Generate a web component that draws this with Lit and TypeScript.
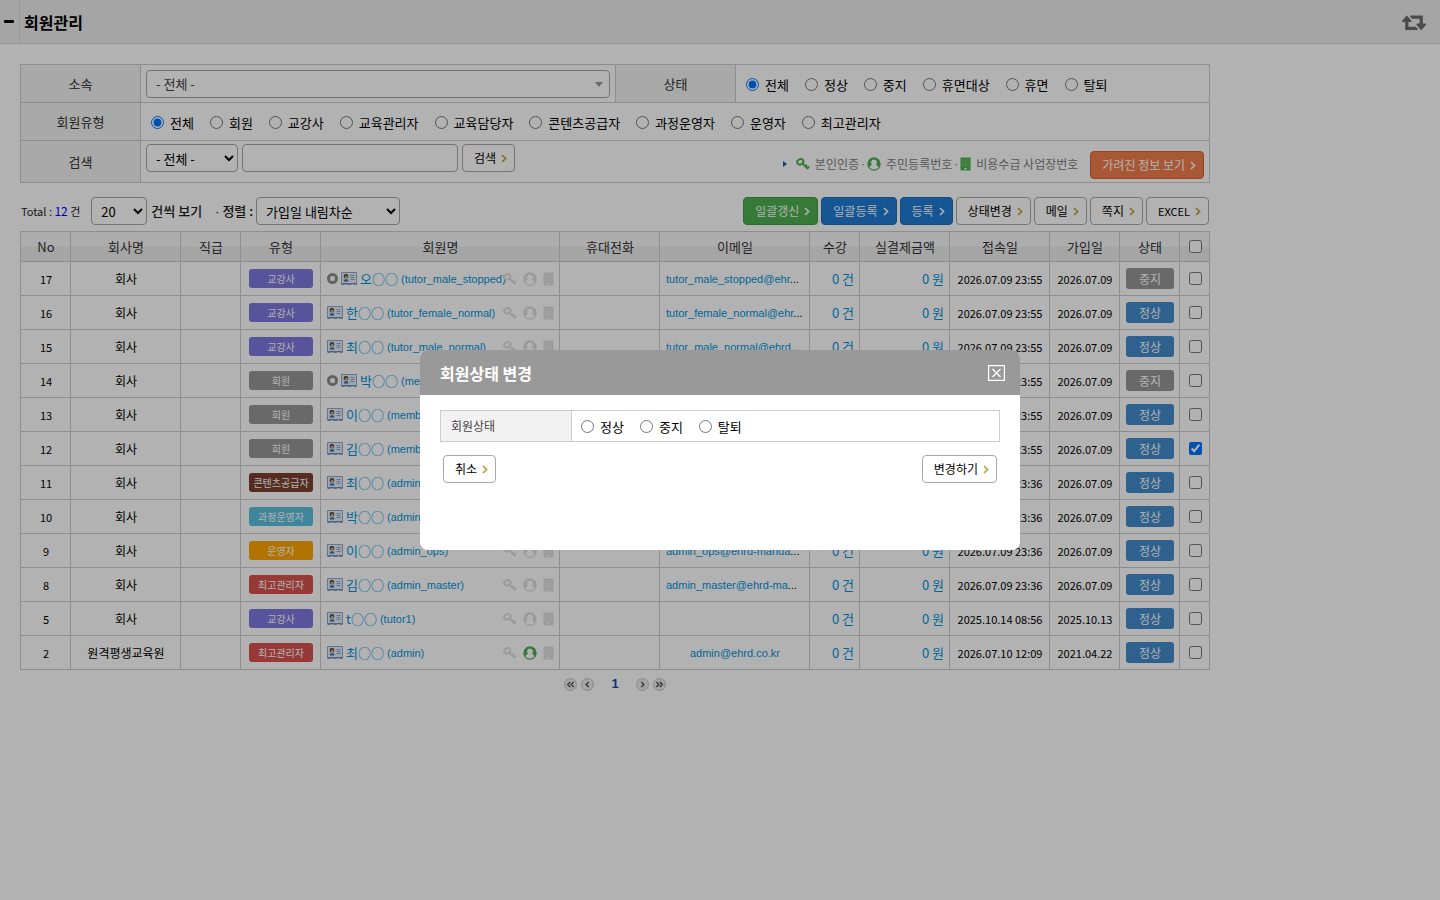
import { LitElement, html, css, svg, nothing } from "lit";
import { customElement } from "lit/decorators.js";
import { classMap } from "lit/directives/class-map.js";

interface Member {
  no: number;
  company: string;
  type: string;
  name: string;
  id: string;
  email: string;
  cut: boolean;
  visited: string;
  joined: string;
  stopped?: boolean;
  checked?: boolean;
  verified?: boolean;
}

const TYPE_CLASS: Record<string, string> = {
  교강사: "tutor",
  회원: "member",
  콘텐츠공급자: "provider",
  과정운영자: "course",
  운영자: "operator",
  최고관리자: "master",
};

const D = "2026.07.09";

const MEMBERS: Member[] = [
  { no: 17, company: "회사", type: "교강사", name: "오○○", id: "tutor_male_stopped", email: "tutor_male_stopped@ehr", cut: true, visited: `${D} 23:55`, joined: D, stopped: true },
  { no: 16, company: "회사", type: "교강사", name: "한○○", id: "tutor_female_normal", email: "tutor_female_normal@ehr", cut: true, visited: `${D} 23:55`, joined: D },
  { no: 15, company: "회사", type: "교강사", name: "최○○", id: "tutor_male_normal", email: "tutor_male_normal@ehrd", cut: true, visited: `${D} 23:55`, joined: D },
  { no: 14, company: "회사", type: "회원", name: "박○○", id: "member_stopped", email: "member_stopped@ehr", cut: true, visited: `${D} 23:55`, joined: D, stopped: true },
  { no: 13, company: "회사", type: "회원", name: "이○○", id: "member_female", email: "member_female@ehrd", cut: true, visited: `${D} 23:55`, joined: D },
  { no: 12, company: "회사", type: "회원", name: "김○○", id: "member_male", email: "member_male@ehrd", cut: true, visited: `${D} 23:55`, joined: D, checked: true },
  { no: 11, company: "회사", type: "콘텐츠공급자", name: "최○○", id: "admin_cp", email: "admin_cp@ehrd-manu", cut: true, visited: `${D} 23:36`, joined: D },
  { no: 10, company: "회사", type: "과정운영자", name: "박○○", id: "admin_course", email: "admin_course@ehrd", cut: true, visited: `${D} 23:36`, joined: D },
  { no: 9, company: "회사", type: "운영자", name: "이○○", id: "admin_ops", email: "admin_ops@ehrd-manua", cut: true, visited: `${D} 23:36`, joined: D },
  { no: 8, company: "회사", type: "최고관리자", name: "김○○", id: "admin_master", email: "admin_master@ehrd-ma", cut: true, visited: `${D} 23:36`, joined: D },
  { no: 5, company: "회사", type: "교강사", name: "t○○", id: "tutor1", email: "", cut: false, visited: "2025.10.14 08:56", joined: "2025.10.13" },
  { no: 2, company: "원격평생교육원", type: "최고관리자", name: "최○○", id: "admin", email: "admin@ehrd.co.kr", cut: false, visited: "2026.07.10 12:09", joined: "2021.04.22", verified: true },
];

const HEADS = ["No", "회사명", "직급", "유형", "회원명", "휴대전화", "이메일", "수강", "실결제금액", "접속일", "가입일", "상태"];

const chevron = html`<svg class="chev" viewBox="0 0 6 9" width="6" height="9" aria-hidden="true">
  <path d="M1 1l3.600 3.500L1 8" fill="none" stroke="currentColor" stroke-width="1.600" />
</svg>`;

const keyIcon = html`<svg class="ico" viewBox="0 0 14 14" width="14" height="14" aria-hidden="true">
  <ellipse cx="4.300" cy="4.800" rx="3.200" ry="2.600" transform="rotate(-25 4.300 4.800)" fill="none" stroke="currentColor" stroke-width="2" />
  <path d="M6.300 6.500l6 5.400M9 9.800l1.800-2.200M11 11.600l2-2.200" fill="none" stroke="currentColor" stroke-width="2" />
</svg>`;

const personIcon = html`<svg class="ico" viewBox="0 0 14 14" width="14" height="14" aria-hidden="true">
  <path fill="currentColor" fill-rule="evenodd" d="M7 .3a6.700 6.700 0 1 0 0 13.400A6.700 6.700 0 0 0 7 .3zM7 2.400a3 3 0 0 1 1.900 5.300c1.400.5 2.300 1.500 2.600 2.900A5.600 5.600 0 0 1 7 12.500a5.600 5.600 0 0 1-4.500-1.900c.3-1.400 1.200-2.400 2.600-2.900A3 3 0 0 1 7 2.400z" />
</svg>`;

const buildingIcon = html`<svg class="ico" viewBox="0 0 11 14" width="11" height="14" aria-hidden="true">
  <path fill="currentColor" d="M.5.5h10v13h-10z" />
  <path d="M2.500 3h1M5 3h1M7.500 3h1M2.500 5h1M5 5h1M7.500 5h1M2.500 7h1M5 7h1M7.500 7h1M2.500 9h1M5 9h1M7.500 9h1" stroke="#fff" stroke-opacity=".55" />
  <path d="M4.500 11h2v1.500h-2z" fill="#fff" />
</svg>`;

const cardIcon = html`<svg class="ico" viewBox="0 0 16 13" width="16" height="13" aria-hidden="true">
  <path d="M.5.5h15v11.500h-3l-1-1-1 1h-4l-1-1-1 1h-4z" fill="#e4eef9" stroke="#8faacb" />
  <path d="M.5 12h3l1-1 1 1h5l1-1 1 1h3" fill="none" stroke="#3f66a0" />
  <rect x="2.500" y="2" width="5" height="7" fill="#c3d3e6" />
  <circle cx="5" cy="4.200" r="2.100" fill="#4a3018" />
  <circle cx="5.200" cy="4.800" r="1.200" fill="#f0c090" />
  <path d="M2.800 9.500c0-3 4.600-3 4.600 0z" fill="#3d66a8" />
  <path d="M9.500 3.500h4M9.500 5.500h4M9.500 7.500h4" stroke="#8ba5c6" />
</svg>`;

const stopIcon = html`<svg class="ico" viewBox="0 0 12 12" width="11" height="11" role="img" aria-label="중지">
  <circle cx="6" cy="6" r="6" fill="#8c8c8c" /><rect x="3.500" y="3.500" width="5" height="5" rx="1" fill="#fff" />
</svg>`;

const pageIcon = (label: string, strokes: string) => html`<button class="pg" type="button" aria-label=${label}>
  <svg viewBox="0 0 13 13" width="13" height="13" aria-hidden="true">
    <circle cx="6.500" cy="6.500" r="6" fill="#ececec" stroke="#c4c4c4" />
    ${svg`<path d=${strokes} fill="none" stroke="#555" stroke-width="1.500" />`}
  </svg>
</button>`;

@customElement("app-root")
export class AppRoot extends LitElement {
  static styles = css`
    :host {
      display: block;
      min-height: 100vh;
      background: #fff;
      color: #000;
      font: 12px/18px "Noto Sans CJK KR", "Noto Sans", sans-serif;
    }
    * { box-sizing: border-box; }
    a { color: #0093dc; text-decoration: none; }
    svg { display: block; flex: none; }
    .bar {
      display: flex;
      align-items: center;
      height: 44px;
      background: #ececec;
      border-bottom: 1px solid #d6d6d6;
      padding-right: 14px;
    }
    .fold {
      align-self: stretch;
      width: 20px;
      padding: 0 0 0 4px;
      border: 0;
      border-right: 1px solid #dcdcdc;
      background: none;
    }
    .bar h1 { flex: 1; margin: 0 0 0 4px; font-size: 16px; line-height: 24px; font-weight: 700; }
    .reload { border: 0; padding: 0; background: none; color: #6c6c6c; }
    main { width: 100%; max-width: 1230px; padding: 20px; }

    .grid { width: 100%; border-collapse: collapse; table-layout: fixed; }
    .grid th, .grid td { border: 1px solid #ccc; padding: 0 5px; font-weight: 400; }
    .search th { background: #f2f2f2; color: #333; font-size: 13px; }
    .search td { height: 38px; }
    .search .c1, .search .c3 { width: 120px; }
    .search .c2 { width: 475px; }
    .search .last { height: 42px; }
    .radios { display: flex; gap: 16px; padding: 2px 5px 0; font-size: 13px; line-height: 18px; }
    .radios label { display: flex; align-items: center; gap: 6px; white-space: nowrap; }
    input[type="radio"], input[type="checkbox"] { width: 13px; height: 13px; margin: 0; flex: none; }
    .box { position: relative; }
    .box svg { position: absolute; right: 7px; top: 12px; pointer-events: none; }
    select, .text {
      height: 28px;
      border: 1px solid #a6a6a6;
      border-radius: 4px;
      background: #fff;
      color: #000;
      font: inherit;
      font-size: 13px;
      padding: 0 5px;
    }
    .box select { display: block; width: 100%; appearance: none; padding: 0 9px; color: #444; }
    .query { display: flex; min-height: 35px; gap: 4px; }
    .query .scope { width: 92px; }
    .text { width: 216px; }
    .btn {
      display: inline-flex;
      align-items: center;
      gap: 5px;
      height: 28px;
      padding: 0 7px 0 11px;
      border: 1px solid #aaa;
      border-radius: 4px;
      background: #fff;
      color: #000;
      font: inherit;
      white-space: nowrap;
    }
    .btn.latin { font-size: 11px; }
    .btn .chev { color: #b5a136; }
    .btn.green { background: #4caf50; border-color: #3d9a42; }
    .btn.blue { background: #227bd4; border-color: #1c6cbc; }
    .btn.orange { background: #f27e4e; border-color: #d9622f; }
    .btn.green, .btn.blue, .btn.orange, .green .chev, .blue .chev, .orange .chev { color: #fff; }
    .legend { display: flex; align-items: center; align-self: flex-end; gap: 12px; margin-left: auto; color: #808080; }
    .legend .keys { display: flex; align-items: center; gap: 2px; padding-bottom: 3px; }
    .legend .key { display: flex; align-items: center; gap: 5px; }
    .legend .ico { color: #4caf50; }
    .legend .mark { margin-right: 7px; }
    .dot { font-family: "Liberation Sans", sans-serif; }

    .tools { display: flex; align-items: center; gap: 3px; padding: 14px 1px 6px; }
    .tools .total { margin-right: 8px; color: #222; font-size: 11px; }
    .tools .total b { color: #00f; font-weight: 400; font-size: 12px; }
    .tools .size { width: 56px; margin-right: 1px; }
    .tools .order { width: 144px; }
    .tools label { font-size: 13px; font-weight: 500; color: #222; }
    .tools .sort { margin-left: 10px; }
    .tools .actions { display: flex; gap: 3px; margin-left: auto; }

    .list th {
      height: 30px;
      background: linear-gradient(#f8f8f8 50%, #ededed 50%);
      color: #333;
      font-size: 13px;
    }
    .list th, .list td { padding: 0 5px 0 6px; }
    .list td { height: 34px; text-align: center; white-space: nowrap; }
    .list .num { text-align: right; font-size: 13px; }
    .list .date, .list .no { font-size: 11px; }
    .list .left { text-align: left; }
    .list .id, .list .mail { font-family: "Liberation Sans", sans-serif; font-size: 11px; }
    .list input { display: block; margin: 0 auto; }
    .w30 { width: 30px; } .w50 { width: 50px; } .w60 { width: 60px; } .w70 { width: 70px; }
    .w80 { width: 80px; } .w90 { width: 90px; } .w100 { width: 100px; } .w110 { width: 110px; }
    .w150 { width: 150px; }
    .who { display: flex; align-items: center; gap: 3px; }
    .who a { display: flex; gap: 3px; flex: 1; min-width: 0; font-size: 13px; }
    .flags { display: flex; align-items: center; gap: 6px; margin-left: -3px; color: #dedede; }
    .flags .on { color: #4caf50; }
    .tag {
      display: block;
      margin: 0 2px;
      border-radius: 3px;
      font-size: 10px;
      line-height: 19px;
      color: #fff;
    }
    .tutor { background: #7f77dd; }
    .member { background: #979797; }
    .provider { background: #7b3f2f; }
    .course { background: #5bc0de; }
    .operator { background: #ffa500; }
    .master { background: #d9534f; }
    .state {
      display: block;
      width: 100%;
      height: 21px;
      padding: 0;
      border: 0;
      border-radius: 3px;
      background: #428bca;
      color: #fff;
      font: inherit;
    }
    .state.off { background: #979797; }
    .pager { display: flex; justify-content: center; align-items: center; gap: 4px; padding-top: 4px; }
    .pg { border: 0; padding: 0; background: none; }
    .pager strong { margin: 0 13px; color: #0d4fae; font: bold 13px/20px "Liberation Sans", sans-serif; }

    .dim {
      position: fixed;
      inset: 0;
      display: flex;
      align-items: center;
      justify-content: center;
      background: rgba(0, 0, 0, 0.3);
    }
    .dialog {
      width: 600px;
      max-width: 100%;
      min-height: 200px;
      border-radius: 8px;
      overflow: hidden;
      background: #fff;
    }
    .dialog header {
      display: flex;
      align-items: center;
      justify-content: space-between;
      height: 45px;
      padding: 0 15px 0 20px;
      background: #999;
      color: #fff;
    }
    .dialog h2 { margin: 0; font-size: 16px; line-height: 24px; font-weight: 700; }
    .close { padding: 0; border: 0; background: none; color: #fff; }
    .body { padding: 15px 20px; }
    .form th { width: 131px; padding: 0 10px; background: #f2f2f2; color: #444; text-align: left; }
    .form td { height: 31px; }
    .form .radios { padding: 1px 4px 0; }
    .foot { display: flex; justify-content: space-between; padding: 13px 3px 0; }
  `;

  private radios(name: string, items: string[], picked = 0) {
    return html`<div class="radios" role="radiogroup">
      ${items.map((t, i) => html`<label><input type="radio" name=${name} .checked=${i === picked} />${t}</label>`)}
    </div>`;
  }

  private button(text: string, tone = "") {
    return html`<button type="button" class="btn ${tone}">${text}${chevron}</button>`;
  }

  private row(m: Member) {
    return html`<tr>
      <td class="no">${m.no}</td>
      <td>${m.company}</td>
      <td></td>
      <td><span class="tag ${TYPE_CLASS[m.type]}">${m.type}</span></td>
      <td class="left">
        <div class="who">
          ${m.stopped ? stopIcon : nothing}${cardIcon}
          <a href="#"><span>${m.name}</span><span class="id">(${m.id})</span></a>
          <div class="flags">${keyIcon}<span class=${classMap({ on: !!m.verified })}>${personIcon}</span>${buildingIcon}</div>
        </div>
      </td>
      <td></td>
      <td class=${classMap({ mail: true, left: m.cut })}>${m.email ? html`<a href="#">${m.email}</a>` : nothing}${m.cut ? "..." : nothing}</td>
      <td class="num"><a href="#">0 건</a></td>
      <td class="num"><a href="#">0 원</a></td>
      <td class="date">${m.visited}</td>
      <td class="date">${m.joined}</td>
      <td><button type="button" class=${classMap({ state: true, off: !!m.stopped })}>${m.stopped ? "중지" : "정상"}</button></td>
      <td><input type="checkbox" aria-label="${m.id} 선택" .checked=${!!m.checked} /></td>
    </tr>`;
  }

  render() {
    const dot = html`<span class="dot">·</span>`;
    return html`
      <div class="bar">
        <button class="fold" type="button" aria-label="메뉴 접기">
          <svg viewBox="0 0 10 4" width="10" height="4"><rect width="10" height="3" rx="1" /></svg>
        </button>
        <h1>회원관리</h1>
        <button class="reload" type="button" aria-label="새로고침">
          <svg viewBox="0 256 1920 1280" width="24" height="16">
            <path fill="currentColor" d="M1280 1504q0 13-9.500 22.500t-22.500 9.500h-960q-8 0-13.500-2t-9-7-5.500-8-3-11.500-1-11.500v-600h-192q-26 0-45-19t-19-45q0-24 15-41l320-384q19-22 49-22t49 22l320 384q15 17 15 41 0 26-19 45t-45 19h-192v384h576q16 0 25 11l160 192q7 10 7 21zm640-416q0 24-15 41l-320 384q-20 23-49 23t-49-23l-320-384q-15-17-15-41 0-26 19-45t45-19h192v-384h-576q-16 0-25-12l-160-192q-7-9-7-20 0-13 9.500-22.500t22.500-9.500h960q8 0 13.500 2t9 7 5.500 8 3 11.500 1 11.500v600h192q26 0 45 19t19 45z" />
          </svg>
        </button>
      </div>
      <main>
        <table class="grid search">
          <colgroup><col class="c1" /><col class="c2" /><col class="c3" /><col /></colgroup>
          <tr>
            <th scope="row"><label for="dept">소속</label></th>
            <td>
              <div class="box">
                <select id="dept"><option>- 전체 -</option></select>
                <svg viewBox="0 0 8 5" width="8" height="5"><path d="M0 0h8L4 5z" fill="#999" /></svg>
              </div>
            </td>
            <th scope="row">상태</th>
            <td>${this.radios("state", ["전체", "정상", "중지", "휴면대상", "휴면", "탈퇴"])}</td>
          </tr>
          <tr>
            <th scope="row">회원유형</th>
            <td colspan="3">
              ${this.radios("type", ["전체", "회원", "교강사", "교육관리자", "교육담당자", "콘텐츠공급자", "과정운영자", "운영자", "최고관리자"])}
            </td>
          </tr>
          <tr>
            <th scope="row"><label for="word">검색</label></th>
            <td class="last" colspan="3">
              <div class="query">
                <select class="scope" aria-label="검색 항목"><option>- 전체 -</option></select>
                <input class="text" id="word" type="text" />
                ${this.button("검색")}
                <div class="legend">
                  <div class="keys">
                    <svg class="mark" viewBox="0 0 4 6" width="4" height="6"><path d="M0 0l4 3-4 3z" fill="#0068b0" /></svg>
                    <span class="key">${keyIcon}본인인증</span>${dot}
                    <span class="key">${personIcon}주민등록번호</span>${dot}
                    <span class="key">${buildingIcon}비용수급 사업장번호</span>
                  </div>
                  ${this.button("가려진 정보 보기", "orange")}
                </div>
              </div>
            </td>
          </tr>
        </table>

        <div class="tools">
          <span class="total">Total : <b>12</b> 건</span>
          <select class="size" id="size"><option>20</option></select>
          <label for="size">건씩 보기</label>
          <label class="sort" for="order">${dot} 정렬 :</label>
          <select class="order" id="order"><option>가입일 내림차순</option></select>
          <div class="actions">
            ${this.button("일괄갱신", "green")}${this.button("일괄등록", "blue")}${this.button("등록", "blue")}
            ${this.button("상태변경")}${this.button("메일")}${this.button("쪽지")}${this.button("EXCEL", "latin")}
          </div>
        </div>

        <table class="grid list">
          <colgroup>
            <col class="w50" /><col class="w110" /><col class="w60" /><col class="w80" /><col /><col class="w100" />
            <col class="w150" /><col class="w50" /><col class="w90" /><col class="w100" /><col class="w70" /><col class="w60" /><col class="w30" />
          </colgroup>
          <thead>
            <tr>
              ${HEADS.map((h) => html`<th scope="col">${h}</th>`)}
              <th scope="col"><input type="checkbox" aria-label="전체 선택" /></th>
            </tr>
          </thead>
          <tbody>${MEMBERS.map((m) => this.row(m))}</tbody>
        </table>

        <nav class="pager" aria-label="페이지">
          ${pageIcon("처음", "M6.200 4L3.700 6.500l2.500 2.500M9.700 4L7.200 6.500l2.500 2.500")}
          ${pageIcon("이전", "M7.700 4L5.200 6.500l2.500 2.500")}
          <strong>1</strong>
          ${pageIcon("다음", "M5.300 4l2.500 2.500L5.300 9")}
          ${pageIcon("마지막", "M3.300 4l2.500 2.500L3.300 9M6.800 4l2.500 2.500L6.800 9")}
        </nav>
      </main>

      <div class="dim">
        <section class="dialog" role="dialog" aria-modal="true" aria-labelledby="dlg">
          <header>
            <h2 id="dlg">회원상태 변경</h2>
            <button class="close" type="button" aria-label="닫기">
              <svg viewBox="0 0 17 16" width="17" height="16">
                <path d="M.5.5h16v15H.5zM4.500 4l8 8M12.500 4l-8 8" fill="none" stroke="currentColor" stroke-width="1.400" />
              </svg>
            </button>
          </header>
          <div class="body">
            <table class="grid form">
              <tr>
                <th scope="row">회원상태</th>
                <td>${this.radios("next", ["정상", "중지", "탈퇴"], -1)}</td>
              </tr>
            </table>
            <div class="foot">${this.button("취소")}${this.button("변경하기")}</div>
          </div>
        </section>
      </div>
    `;
  }
}
